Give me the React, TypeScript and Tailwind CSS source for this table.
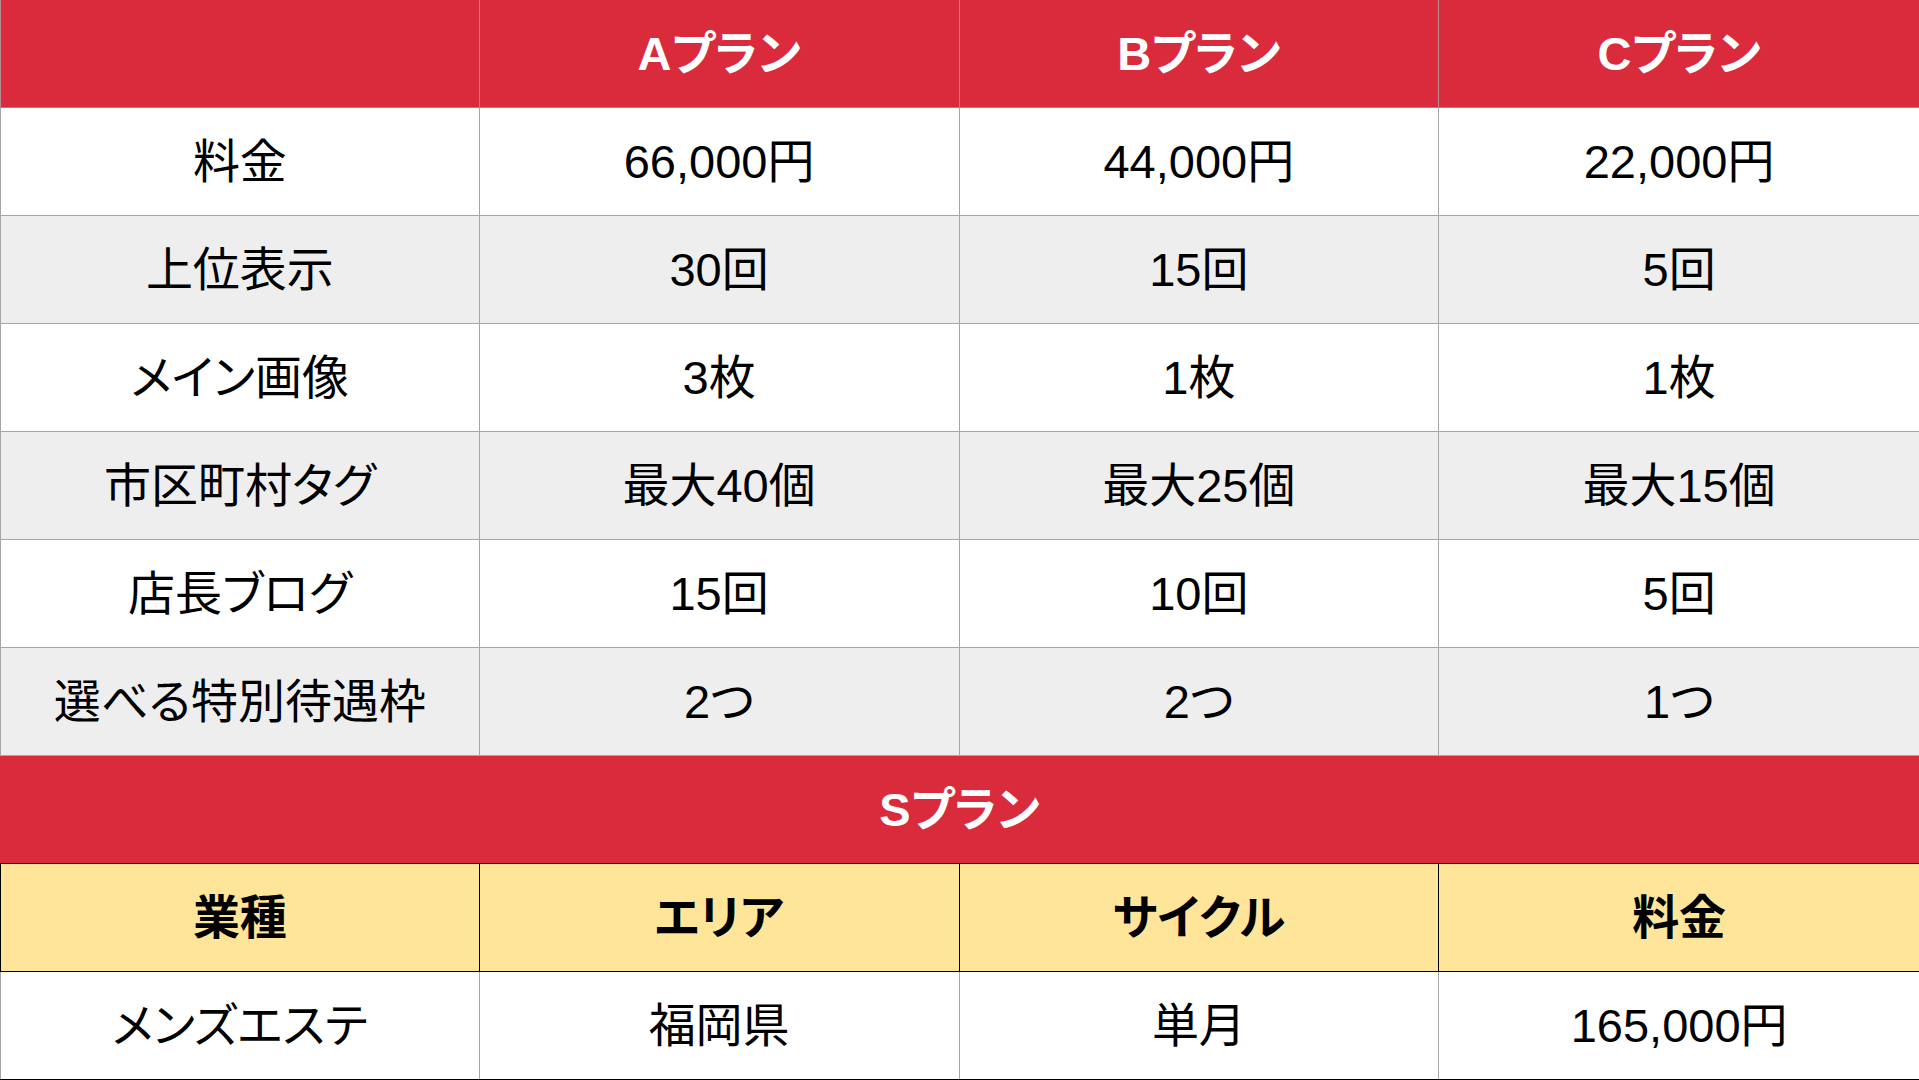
const headers = ["", "Aプラン", "Bプラン", "Cプラン"];

const rows: string[][] = [
  ["料金", "66,000円", "44,000円", "22,000円"],
  ["上位表示", "30回", "15回", "5回"],
  ["メイン画像", "3枚", "1枚", "1枚"],
  ["市区町村タグ", "最大40個", "最大25個", "最大15個"],
  ["店長ブログ", "15回", "10回", "5回"],
  ["選べる特別待遇枠", "2つ", "2つ", "1つ"],
];

const sHeaders = ["業種", "エリア", "サイクル", "料金"];
const sRow = ["メンズエステ", "福岡県", "単月", "165,000円"];

export default function App() {
  return (
    <div
      className="w-[1919px] h-[1080px] bg-white text-black text-[47px] leading-none"
      style={{ fontFamily: '"Liberation Sans", "Noto Sans CJK JP", sans-serif', fontFeatureSettings: '"palt"' }}
    >
      {/* top plan header */}
      <div className="grid grid-cols-4 h-[108px] bg-[#d92b3b] border-b border-[#b87a80]">
        {headers.map((h, i) => (
          <div
            key={i}
            className={`flex items-center justify-center font-bold text-white ${
              i < 3 ? "border-r border-[#b98a8e]" : ""
            } ${i === 0 ? "border-l border-[#b98a8e]" : ""}`}
          >
            {h}
          </div>
        ))}
      </div>

      {rows.map((r, ri) => (
        <div
          key={ri}
          className={`grid grid-cols-4 h-[108px] border-b border-[#a6a6a6] ${
            ri % 2 === 1 ? "bg-[#eeeeee]" : "bg-white"
          }`}
        >
          {r.map((c, ci) => (
            <div
              key={ci}
              className={`flex items-center justify-center ${
                ci < 3 ? "border-r border-[#a6a6a6]" : ""
              } ${ci === 0 ? "border-l border-[#a6a6a6]" : ""}`}
            >
              {c}
            </div>
          ))}
        </div>
      ))}

      {/* S plan */}
      <div className="h-[108px] bg-[#d92b3b] border-b border-black flex items-center justify-center font-bold text-white">
        Sプラン
      </div>

      <div className="grid grid-cols-4 h-[108px] bg-[#ffe599] border-b border-black">
        {sHeaders.map((c, ci) => (
          <div
            key={ci}
            className={`flex items-center justify-center font-bold ${
              ci < 3 ? "border-r border-black" : ""
            } ${ci === 0 ? "border-l border-black" : ""}`}
          >
            {c}
          </div>
        ))}
      </div>

      <div className="grid grid-cols-4 h-[108px] bg-white border-b border-black">
        {sRow.map((c, ci) => (
          <div
            key={ci}
            className={`flex items-center justify-center ${
              ci < 3 ? "border-r border-[#a6a6a6]" : ""
            } ${ci === 0 ? "border-l border-[#a6a6a6]" : ""}`}
          >
            {c}
          </div>
        ))}
      </div>
    </div>
  );
}
